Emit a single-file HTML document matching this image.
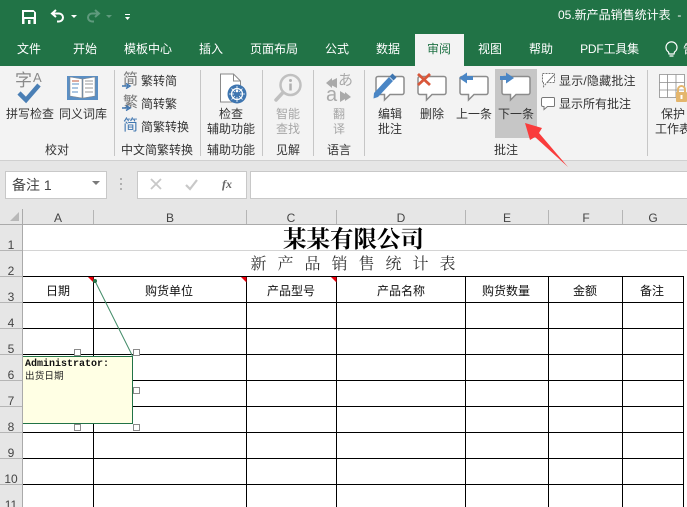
<!DOCTYPE html>
<html><head><meta charset="utf-8">
<style>
html,body{margin:0;padding:0;width:687px;height:507px;overflow:hidden;background:#fff}
body{position:relative;font-family:"Liberation Sans","Noto Sans CJK SC",sans-serif;font-size:12px;color:#333}
.t{position:absolute;white-space:nowrap;line-height:16px}
.c{text-align:center;transform:translateX(-50%)}
.w{color:#fff;font-size:12px}
.g{color:#a6a6a6}
.b{position:absolute;background:#000}
.lg{position:absolute;background:#d4d4d4}
.sep{position:absolute;top:70px;height:86px;width:1px;background:#c6c6c6}
.rh{position:absolute;left:0;width:22px;text-align:center;color:#444;font-size:12px;line-height:14px}
.ch{position:absolute;top:211px;text-align:center;color:#444;font-size:12px;line-height:14px;transform:translateX(-50%)}
.cs{position:absolute;top:210px;height:14px;width:1px;background:#b5b5b5}
.rs{position:absolute;left:0;width:22px;height:1px;background:#b5b5b5}
.cell{position:absolute;top:283px;font-size:12px;line-height:16px;color:#111;transform:translateX(-50%);white-space:nowrap}
.h{position:absolute;width:5px;height:5px;border:1px solid #8a8a8a;background:#fff}
svg{position:absolute;overflow:visible}
</style></head><body>
<div style="position:absolute;left:0;top:0;width:687px;height:66px;background:#217346"></div>
<div style="position:absolute;left:415px;top:34px;width:49px;height:32px;background:#f3f3f3"></div>
<div style="position:absolute;left:0;top:66px;width:687px;height:94px;background:#f3f3f3"></div>
<div style="position:absolute;left:0;top:160px;width:687px;height:64px;background:#e6e6e6;border-top:1px solid #d0d0d0;box-sizing:border-box"></div>

<!-- QAT -->
<svg style="left:0;top:0" width="140" height="34">
<path d="M22 10h11.500l2.500 2.500V24H22z" fill="#fff"/>
<rect x="24" y="12" width="10" height="5" fill="#217346"/>
<rect x="24.500" y="19" width="9" height="5" fill="#217346"/>
<rect x="28" y="20" width="2.500" height="4" fill="#fff"/>
<path d="M56 10l-4 3.500 4 3.500M52 13.500h7a4 4 0 0 1 0 8h-2" fill="none" stroke="#fff" stroke-width="2"/>
<path d="M71 15h6l-3 3z" fill="#fff"/>
<path d="M95 10l4 3.500-4 3.500M99 13.500h-7a4 4 0 0 0 0 8h2" fill="none" stroke="#5f9a7d" stroke-width="2"/>
<path d="M106 15h6l-3 3z" fill="#5f9a7d"/>
<path d="M125 14h5v1h-5zM125 17h5l-2.500 3z" fill="#fff"/>
</svg>
<div class="t w" style="left:558px;top:7px;">05.新产品销售统计表&nbsp; -</div>

<!-- Tabs -->
<div class="t w c" style="left:29px;top:41px">文件</div>
<div class="t w c" style="left:85px;top:41px">开始</div>
<div class="t w c" style="left:148px;top:41px">模板中心</div>
<div class="t w c" style="left:211px;top:41px">插入</div>
<div class="t w c" style="left:274px;top:41px">页面布局</div>
<div class="t w c" style="left:337px;top:41px">公式</div>
<div class="t w c" style="left:388px;top:41px">数据</div>
<div class="t c" style="left:439px;top:41px;color:#217346">审阅</div>
<div class="t w c" style="left:490px;top:41px">视图</div>
<div class="t w c" style="left:541px;top:41px">帮助</div>
<div class="t w c" style="left:609.500px;top:41px;letter-spacing:-.2px">PDF工具集</div>
<svg style="left:665px;top:41px" width="14" height="18"><path d="M3.500 11a5.500 5.500 0 1 1 6 0l-.5 2H4z M4.500 15h4" fill="none" stroke="#fff" stroke-width="1.200"/></svg>
<div class="t w" style="left:683px;top:41px">告</div>

<!-- Ribbon separators -->
<div class="sep" style="left:114px"></div>
<div class="sep" style="left:200px"></div>
<div class="sep" style="left:262px"></div>
<div class="sep" style="left:313px"></div>
<div class="sep" style="left:364px"></div>
<div class="sep" style="left:647px"></div>

<!-- Proofing -->
<div class="t" style="left:15px;top:72px;font-size:17px;line-height:17px;color:#8a8a8a">字</div>
<div class="t" style="left:33px;top:71px;font-size:13px;line-height:14px;color:#8a8a8a">A</div>
<svg style="left:16px;top:80px" width="26" height="26"><path d="M3 13l7 7L23 5" fill="none" stroke="#4a7fb5" stroke-width="4.500"/></svg>
<svg style="left:66px;top:74px" width="34" height="28">
<rect x="1" y="2" width="31" height="24" fill="#5b8fc4"/>
<path d="M4 3l12 2v19l-12-2zM29 3l-12 2v19l12-2z" fill="#fff" stroke="#8a8a8a" stroke-width=".6"/>
<path d="M6 7h7" stroke="#c0563a"/><path d="M6 10h7M6 14h6M6 18h6" stroke="#5b8fc4"/><path d="M19 7h8M19 10h8M19 14h8M19 18h8" stroke="#999"/></svg>
<div class="t c" style="left:30px;top:106px">拼写检查</div>
<div class="t c" style="left:83px;top:106px">同义词库</div>
<div class="t c" style="left:57px;top:142px">校对</div>

<!-- Chinese conv -->
<div class="t" style="left:123px;top:72px;font-size:15px;color:#777">简</div>
<svg style="left:122px;top:83px" width="10" height="6"><path d="M0 3h6M4 .5L8 3 4 5.500" fill="none" stroke="#3f76b0" stroke-width="1.500"/></svg>
<div class="t" style="left:141px;top:73px">繁转简</div>
<div class="t" style="left:123px;top:95px;font-size:15px;color:#777">繁</div>
<svg style="left:122px;top:105px" width="10" height="6"><path d="M0 3h6M4 .5L8 3 4 5.500" fill="none" stroke="#3f76b0" stroke-width="1.500"/></svg>
<div class="t" style="left:141px;top:96px">简转繁</div>
<div class="t" style="left:123px;top:118px;font-size:15px;color:#3f76b0">简</div>
<div class="t" style="left:141px;top:119px">简繁转换</div>
<div class="t c" style="left:157px;top:142px">中文简繁转换</div>

<!-- Accessibility -->
<svg style="left:218px;top:73px" width="32" height="36">
<path d="M2.500 1h13l7 7v21h-20z" fill="#fff" stroke="#8a8a8a"/><path d="M15.500 1v7h7" fill="none" stroke="#8a8a8a"/>
<circle cx="19" cy="21" r="9.500" fill="#3f76b0"/>
<circle cx="19" cy="21" r="5.500" fill="none" stroke="#fff" stroke-width="1.200"/>
<path d="M19 13v16M11 21h16M13.500 15.500l11 11M24.500 15.500l-11 11" stroke="#fff" stroke-width=".8"/><circle cx="19" cy="21" r="3" fill="#3f76b0"/><circle cx="19" cy="18" r="1.300" fill="#fff"/></svg>
<div class="t c" style="left:231px;top:106px">检查</div>
<div class="t c" style="left:231px;top:121px">辅助功能</div>
<div class="t c" style="left:231px;top:142px">辅助功能</div>

<!-- Insights -->
<svg style="left:272px;top:73px" width="32" height="32">
<circle cx="18.500" cy="12" r="10" fill="none" stroke="#c0c0c0" stroke-width="2.500"/>
<path d="M10.500 20L4 27" stroke="#c0c0c0" stroke-width="3.500" stroke-linecap="round"/>
<circle cx="18.500" cy="7.500" r="1.500" fill="#b0b0b0"/><path d="M18.500 10.500v7" stroke="#b0b0b0" stroke-width="2.500"/></svg>
<div class="t c g" style="left:288px;top:106px">智能</div>
<div class="t c g" style="left:288px;top:121px">查找</div>
<div class="t c" style="left:288px;top:142px">见解</div>

<!-- Language -->
<svg style="left:0;top:0" width="360" height="110"><path d="M326 83l6-5v2.500l5-2.500v10l-5-2.500V88z" fill="#aaa"/><path d="M351 97l-6-5v2l-5-3v11l5-3v2z" fill="#aaa"/></svg>
<div class="t" style="left:338px;top:73px;font-size:15px;color:#aaa">あ</div>
<div class="t" style="left:326px;top:85px;font-size:20px;line-height:20px;color:#aaa">a</div>
<div class="t c g" style="left:339px;top:106px">翻</div>
<div class="t c g" style="left:339px;top:121px">译</div>
<div class="t c" style="left:339px;top:142px">语言</div>

<!-- Comments -->
<div style="position:absolute;left:495px;top:69px;width:42px;height:69px;background:#c6c6c6"></div>
<svg style="left:370px;top:68px" width="180" height="36">
<g fill="#fff" stroke="#8c8c8c" stroke-width="1.500">
<path d="M8 8.500h24a2 2 0 0 1 2 2v14a2 2 0 0 1-2 2H20L14.500 32V26.500H8a2 2 0 0 1-2-2v-14a2 2 0 0 1 2-2z"/>
<path d="M50 8.500h24a2 2 0 0 1 2 2v14a2 2 0 0 1-2 2H62L56.500 32V26.500H50a2 2 0 0 1-2-2v-14a2 2 0 0 1 2-2z"/>
<path d="M92 8.500h24a2 2 0 0 1 2 2v14a2 2 0 0 1-2 2H104L98.500 32V26.500H92a2 2 0 0 1-2-2v-14a2 2 0 0 1 2-2z"/>
<path d="M134 8.500h24a2 2 0 0 1 2 2v14a2 2 0 0 1-2 2H146L140.500 32V26.500H134a2 2 0 0 1-2-2v-14a2 2 0 0 1 2-2z"/>
</g>
<path d="M4 25l-0 0L19 9l4 4L8 29l-4.500 1.500z" fill="#4a86c5"/>
<path d="M19.500 8.500l3-3 4 4-3 3z" fill="#3f76b0"/>
<path d="M48 6l12 11M60 6L48 17" stroke="#d9573a" stroke-width="2.800"/>
<path d="M103 10H96" stroke="#4a86c5" stroke-width="4"/><path d="M97 4.500L89 10l8 5.500z" fill="#4a86c5"/>
<path d="M130 10h7" stroke="#4a86c5" stroke-width="4"/><path d="M136 4.500l8 5.500-8 5.500z" fill="#4a86c5"/>
</svg>
<div class="t c" style="left:390px;top:106px">编辑</div>
<div class="t c" style="left:390px;top:121px">批注</div>
<div class="t c" style="left:432px;top:106px">删除</div>
<div class="t c" style="left:474px;top:106px">上一条</div>
<div class="t c" style="left:516px;top:106px">下一条</div>
<div class="t c" style="left:506px;top:142px">批注</div>
<svg style="left:540px;top:72px" width="16" height="40">
<path d="M2.500 1.500h12v9H7l-3.500 4v-4H2.500z" fill="#fff" stroke="#777" stroke-dasharray="2 1"/>
<path d="M7 10.500L14 3" stroke="#777"/>
<path d="M3 25.500h10.500a1 1 0 0 1 1 1v7a1 1 0 0 1-1 1H7.500L4 37.500v-3H3a1.500 1.500 0 0 1-1.500-1.500v-6A1.500 1.500 0 0 1 3 25.500z" fill="#fff" stroke="#777"/></svg>
<div class="t" style="left:559px;top:73px;letter-spacing:.2px">显示/隐藏批注</div>
<div class="t" style="left:559px;top:96px">显示所有批注</div>

<!-- Protect -->
<svg style="left:659px;top:74px" width="28" height="30">
<path d="M.5.500h25v23H.5zM.5 8.500h25M.5 16h25M8.500.500v23M17 .500v23" fill="#fff" stroke="#8c8c8c" stroke-width=".8"/>
<rect x="17" y="18" width="11" height="10" rx="1" fill="#e4b66d"/>
<path d="M19 18v-2.500a3.500 3.500 0 0 1 7 0V18" fill="none" stroke="#e4b66d" stroke-width="2"/><rect x="21.500" y="21" width="2" height="4" fill="#fff"/></svg>
<div class="t" style="left:661px;top:106px">保护</div>
<div class="t" style="left:655px;top:121px">工作表</div>

<!-- Formula bar -->
<div style="position:absolute;left:5px;top:171px;width:100px;height:26px;background:#fff;border:1px solid #c8c8c8"></div>
<div class="t" style="left:12px;top:177px;font-size:14px;color:#444">备注 1</div>
<svg style="left:92px;top:181px" width="10" height="6"><path d="M0 0h8L4 4z" fill="#7a7a7a"/></svg>
<svg style="left:120px;top:178px" width="4" height="14"><path d="M1 0v2M1 5v2M1 10v2" stroke="#b0b0b0" stroke-width="2"/></svg>
<div style="position:absolute;left:137px;top:171px;width:108px;height:26px;background:#fff;border:1px solid #c8c8c8"></div>
<svg style="left:149px;top:178px" width="50" height="14">
<path d="M2 1l10 10M12 1L2 11" stroke="#c8c8c8" stroke-width="1.800"/>
<path d="M37 7l4 4 7-9" fill="none" stroke="#c8c8c8" stroke-width="2.200"/></svg>
<div class="t" style="left:222px;top:176px;font-family:'Liberation Serif',serif;font-style:italic;font-weight:bold;font-size:12px;color:#666">fx</div>
<div style="position:absolute;left:250px;top:171px;width:437px;height:26px;background:#fff;border:1px solid #c8c8c8;box-sizing:content-box"></div>

<!-- Header -->
<svg style="left:10px;top:212px" width="10" height="10"><path d="M9 0v9H0z" fill="#b8b8b8"/></svg>
<div class="ch" style="left:58px">A</div><div class="ch" style="left:170px">B</div><div class="ch" style="left:291px">C</div><div class="ch" style="left:401px">D</div><div class="ch" style="left:507px">E</div><div class="ch" style="left:586px">F</div><div class="ch" style="left:653px">G</div>
<div class="cs" style="left:22px"></div><div class="cs" style="left:93px"></div><div class="cs" style="left:246px"></div><div class="cs" style="left:336px"></div><div class="cs" style="left:465px"></div><div class="cs" style="left:548px"></div><div class="cs" style="left:622px"></div>
<div style="position:absolute;left:0;top:224px;width:687px;height:283px;background:#fff"></div>
<div style="position:absolute;left:0;top:224px;width:22px;height:283px;background:#e6e6e6"></div>
<div style="position:absolute;left:22px;top:209px;width:1px;height:298px;background:#aaa"></div>
<div style="position:absolute;left:0;top:224px;width:687px;height:1px;background:#aaa"></div>
<div class="rs" style="top:250px"></div><div class="rs" style="top:276px"></div><div class="rs" style="top:302px"></div><div class="rs" style="top:328px"></div><div class="rs" style="top:354px"></div><div class="rs" style="top:380px"></div><div class="rs" style="top:406px"></div><div class="rs" style="top:432px"></div><div class="rs" style="top:458px"></div><div class="rs" style="top:484px"></div>
<div class="rh" style="top:238px">1</div><div class="rh" style="top:264px">2</div><div class="rh" style="top:290px">3</div><div class="rh" style="top:316px">4</div><div class="rh" style="top:342px">5</div><div class="rh" style="top:368px">6</div><div class="rh" style="top:394px">7</div><div class="rh" style="top:420px">8</div><div class="rh" style="top:446px">9</div><div class="rh" style="top:472px">10</div><div class="rh" style="top:498px">11</div>

<!-- Grid -->
<div class="lg" style="left:23px;top:250px;width:664px;height:1px"></div>
<div class="b" style="left:23px;top:276px;width:660px;height:1px"></div>
<div class="b" style="left:23px;top:302px;width:660px;height:1px"></div>
<div class="b" style="left:23px;top:328px;width:660px;height:1px"></div>
<div class="b" style="left:23px;top:354px;width:660px;height:1px"></div>
<div class="b" style="left:23px;top:380px;width:660px;height:1px"></div>
<div class="b" style="left:23px;top:406px;width:660px;height:1px"></div>
<div class="b" style="left:23px;top:432px;width:660px;height:1px"></div>
<div class="b" style="left:23px;top:458px;width:660px;height:1px"></div>
<div class="b" style="left:23px;top:484px;width:660px;height:1px"></div>
<div class="b" style="left:93px;top:276px;width:1px;height:231px"></div>
<div class="b" style="left:246px;top:276px;width:1px;height:231px"></div>
<div class="b" style="left:336px;top:276px;width:1px;height:231px"></div>
<div class="b" style="left:465px;top:276px;width:1px;height:231px"></div>
<div class="b" style="left:548px;top:276px;width:1px;height:231px"></div>
<div class="b" style="left:622px;top:276px;width:1px;height:231px"></div>
<div class="b" style="left:683px;top:276px;width:1px;height:231px"></div>

<!-- Titles -->
<div class="t c" style="left:353.500px;top:226px;font-family:'Liberation Serif','Noto Serif CJK SC',serif;font-weight:bold;font-size:23.500px;line-height:26px;color:#000;margin-top:1px">某某有限公司</div>
<div class="t c" style="left:353.500px;top:255px;font-family:'Liberation Serif','Noto Serif CJK SC',serif;font-size:16px;line-height:20px;color:#333;letter-spacing:11px;margin-left:5px">新产品销售统计表</div>

<div class="cell" style="left:58px">日期</div>
<div class="cell" style="left:169px">购货单位</div>
<div class="cell" style="left:291px">产品型号</div>
<div class="cell" style="left:401px">产品名称</div>
<div class="cell" style="left:506px">购货数量</div>
<div class="cell" style="left:585px">金额</div>
<div class="cell" style="left:652px">备注</div>

<svg style="left:0;top:0" width="687" height="507">
<path d="M88 277h5.500v5.500zM241 277h5.500v5.500zM331 277h5.500v5.500z" fill="#e8000b"/>
<path d="M95 281L132.500 356" stroke="#3f8a66" stroke-width="1" fill="none"/>
<circle cx="95" cy="281" r="2" fill="#217346"/>
</svg>

<!-- Comment -->
<div style="position:absolute;left:23px;top:356px;width:109px;height:66px;background:#ffffe4;border:1px solid #217346;border-left:none"></div>
<div class="t" style="left:25px;top:358px;font-family:'Liberation Mono',monospace;font-weight:bold;font-size:10px;line-height:14px;color:#111">Administrator:</div>
<div class="t" style="left:25px;top:370px;font-size:9.500px;line-height:14px;color:#222;letter-spacing:.2px">出货日期</div>
<div class="h" style="left:74px;top:349px"></div>
<div class="h" style="left:133px;top:349px"></div>
<div class="h" style="left:133px;top:387px"></div>
<div class="h" style="left:74px;top:424px"></div>
<div class="h" style="left:133px;top:424px"></div>

<!-- Red arrow -->
<svg style="left:0;top:0" width="687" height="507">
<path d="M525 123L542 128 539 133 568 167 535 137 530 140z" fill="#f93c3c"/>
</svg>
</body></html>
